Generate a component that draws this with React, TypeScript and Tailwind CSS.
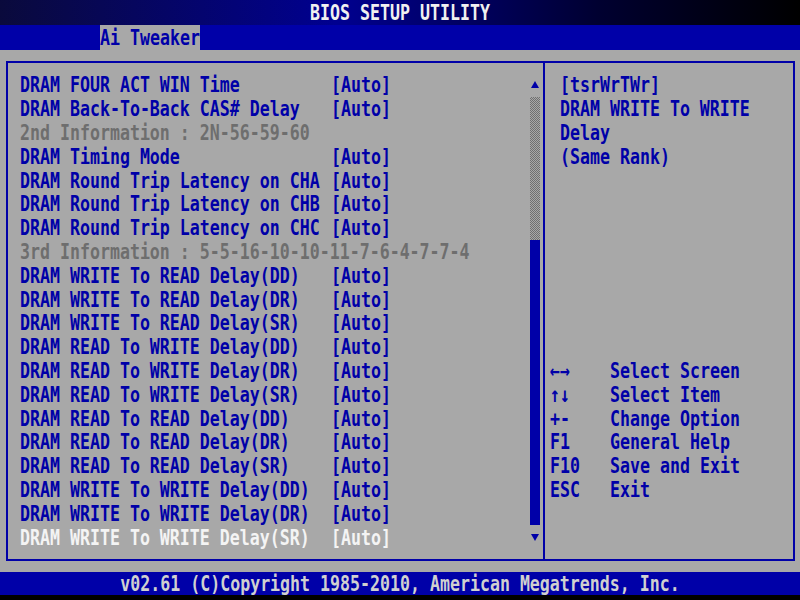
import React from "react"

type Item = { label: string; value?: string; kind?: "info" | "sel" }

const ITEMS: Item[] = [
  { label: "DRAM FOUR ACT WIN Time", value: "[Auto]" },
  { label: "DRAM Back-To-Back CAS# Delay", value: "[Auto]" },
  { label: "2nd Information : 2N-56-59-60", kind: "info" },
  { label: "DRAM Timing Mode", value: "[Auto]" },
  { label: "DRAM Round Trip Latency on CHA", value: "[Auto]" },
  { label: "DRAM Round Trip Latency on CHB", value: "[Auto]" },
  { label: "DRAM Round Trip Latency on CHC", value: "[Auto]" },
  { label: "3rd Information : 5-5-16-10-10-11-7-6-4-7-7-4", kind: "info" },
  { label: "DRAM WRITE To READ Delay(DD)", value: "[Auto]" },
  { label: "DRAM WRITE To READ Delay(DR)", value: "[Auto]" },
  { label: "DRAM WRITE To READ Delay(SR)", value: "[Auto]" },
  { label: "DRAM READ To WRITE Delay(DD)", value: "[Auto]" },
  { label: "DRAM READ To WRITE Delay(DR)", value: "[Auto]" },
  { label: "DRAM READ To WRITE Delay(SR)", value: "[Auto]" },
  { label: "DRAM READ To READ Delay(DD)", value: "[Auto]" },
  { label: "DRAM READ To READ Delay(DR)", value: "[Auto]" },
  { label: "DRAM READ To READ Delay(SR)", value: "[Auto]" },
  { label: "DRAM WRITE To WRITE Delay(DD)", value: "[Auto]" },
  { label: "DRAM WRITE To WRITE Delay(DR)", value: "[Auto]" },
  { label: "DRAM WRITE To WRITE Delay(SR)", value: "[Auto]", kind: "sel" },
]

const HELP = ["[tsrWrTWr]", "DRAM WRITE To WRITE", "Delay", "(Same Rank)"]

const KEYS: [string, string][] = [
  ["←→", "Select Screen"],
  ["↑↓", "Select Item"],
  ["+-", "Change Option"],
  ["F1", "General Help"],
  ["F10", "Save and Exit"],
  ["ESC", "Exit"],
]

// VGA cells are tall and narrow, so stretch the mono glyphs a bit
function T({ children }: { children: React.ReactNode }) {
  return (
    <span className="inline-block origin-center translate-y-[2px] scale-y-[1.3] whitespace-pre">{children}</span>
  )
}

function Arrow({ down }: { down?: boolean }) {
  return (
    <svg width="10" height="8" viewBox="0 0 10 8">
      <polygon points={down ? "1,1 9,1 5,8" : "5,0 9,7 1,7"} fill="#0000a8" />
    </svg>
  )
}

export default function App() {
  const rowColor = (k?: Item["kind"]) =>
    k === "info" ? "text-[#6e6e6e]" : k === "sel" ? "text-[#f4f4f4]" : "text-[#0000a8]"

  return (
    <div className="flex h-[600px] w-[800px] flex-col overflow-hidden bg-black font-['DejaVu_Sans_Mono',monospace] text-[16.6px] font-bold">
      {/* title */}
      <div className="flex h-[25px] items-center justify-center bg-[linear-gradient(to_right,#0a0a3c,#000090_42%,#000030_75%,#000)] text-[#f0f0f0]">
        <T>BIOS SETUP UTILITY</T>
      </div>
      {/* tabs */}
      <div className="flex h-[25px] bg-[#0000a8] pl-[100px]">
        <div className="flex w-[100px] items-center bg-[#a8a8a8] text-[#0000a8]">
          <T>Ai Tweaker</T>
        </div>
      </div>

      {/* body */}
      <div className="h-[522px] bg-[#a8a8a8] pb-[11px] pl-[6px] pr-[5px] pt-[11px]">
        <div className="flex h-[500px] border-2 border-[#0000a8]">
          <div className="flex w-[535px] pl-[12px] pt-[10px]">
            <div className="w-[510px]">
              {ITEMS.map((it) => (
                <div key={it.label} className={`flex h-[23.8px] items-center ${rowColor(it.kind)}`}>
                  <div className={it.value ? "w-[311px]" : ""}>
                    <T>{it.label}</T>
                  </div>
                  {it.value && <T>{it.value}</T>}
                </div>
              ))}
            </div>
            <div className="flex w-[10px] flex-col">
              <div className="flex h-[24px] items-center justify-center">
                <Arrow />
              </div>
              <div className="h-[143px] bg-[repeating-conic-gradient(#707070_0_25%,#a8a8a8_0_50%)] bg-[length:2px_2px]" />
              <div className="h-[285px] bg-[#0000a8]" />
              <div className="flex h-[24px] items-center justify-center">
                <Arrow down />
              </div>
            </div>
          </div>

          <div className="flex-1 border-l-2 border-[#0000a8] pl-[5px] pt-[10px] text-[#0000a8]">
            {HELP.map((h) => (
              <div key={h} className="flex h-[23.8px] items-center pl-[10px]">
                <T>{h}</T>
              </div>
            ))}
            <div className="h-[190.4px]" />
            {KEYS.map(([k, d]) => (
              <div key={k} className="flex h-[23.8px] items-center">
                <div className="w-[60px]">
                  <T>{k}</T>
                </div>
                <T>{d}</T>
              </div>
            ))}
          </div>
        </div>
      </div>

      {/* footer */}
      <div className="flex h-[23px] items-center justify-center bg-[#0000a8] text-[#d0d0d0]">
        <T>v02.61 (C)Copyright 1985-2010, American Megatrends, Inc.</T>
      </div>
    </div>
  )
}
